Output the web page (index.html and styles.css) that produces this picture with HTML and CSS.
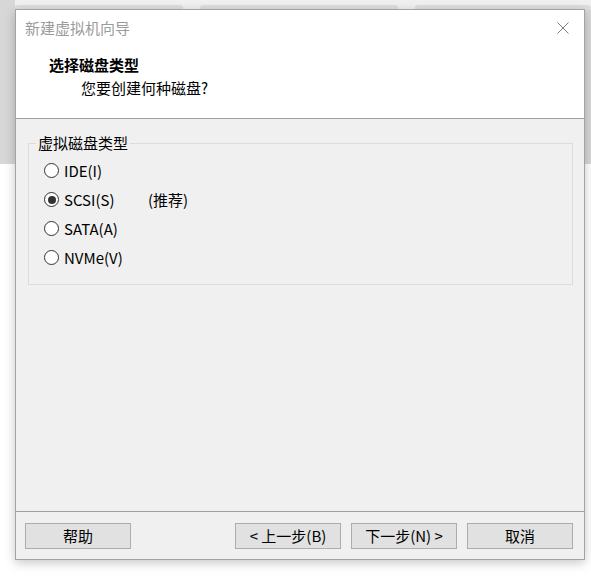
FILE: index.html
```html
<!DOCTYPE html>
<html lang="zh-CN">
<head>
<meta charset="utf-8">
<title>新建虚拟机向导</title>
<link rel="stylesheet" href="styles.css">
</head>
<body>
<div class="desktop">
  <div class="backdrop">
    <div class="back-top">
      <span class="tab tab-a"></span>
      <span class="tab tab-b"></span>
      <span class="tab tab-c"></span>
    </div>
  </div>
  <div class="dialog">
    <div class="header">
      <div class="titlebar">
        <span class="title">新建虚拟机向导</span>
        <svg class="close" width="12" height="12" viewBox="0 0 12 12" aria-label="关闭">
          <path d="M0.5 0.5 L11.5 11.5 M11.5 0.5 L0.5 11.5" stroke="#7a7a7a" stroke-width="1" fill="none"/>
        </svg>
      </div>
      <div class="heading">选择磁盘类型</div>
      <div class="subheading">您要创建何种磁盘?</div>
    </div>
    <div class="sep"></div>
    <div class="content">
      <fieldset class="group">
        <legend class="legend">虚拟磁盘类型</legend>
        <div class="option"><span class="radio"></span><span class="label">IDE(I)</span></div>
        <div class="option"><span class="radio checked"></span><span class="label label-wide">SCSI(S)</span><span class="hint">(推荐)</span></div>
        <div class="option"><span class="radio"></span><span class="label">SATA(A)</span></div>
        <div class="option"><span class="radio"></span><span class="label">NVMe(V)</span></div>
      </fieldset>
    </div>
    <div class="sep"></div>
    <div class="buttons">
      <button class="btn">帮助</button>
      <span class="spacer"></span>
      <button class="btn">&lt; 上一步(B)</button>
      <button class="btn">下一步(N) &gt;</button>
      <button class="btn">取消</button>
    </div>
  </div>
</div>
</body>
</html>
```

FILE: styles.css
```css
html, body {
  margin: 0;
  padding: 0;
  background: #ffffff;
}

body {
  width: 591px;
  height: 581px;
  overflow: hidden;
  font-family: "Noto Sans CJK SC", "Noto Sans", sans-serif;
  font-size: 15px;
  color: #000;
}

.desktop {
  position: relative;
  width: 591px;
  height: 581px;
  background: #ffffff;
}

.backdrop {
  position: absolute;
  left: 0;
  top: 0;
  width: 591px;
  height: 164px;
  background: #d7d7d7;
}

.back-top {
  position: absolute;
  left: 15px;
  top: 0;
  width: 576px;
  height: 10px;
  background: #f0f0f0;
}

.tab {
  position: absolute;
  top: 5px;
  height: 5px;
  background: #dedede;
  border-radius: 3px 3px 0 0;
}
.tab-a { left: 0; width: 168px; }
.tab-b { left: 185px; width: 198px; }
.tab-c { left: 400px; width: 176px; }

.dialog {
  position: absolute;
  left: 15px;
  top: 9px;
  width: 568px;
  height: 549px;
  border: 1px solid #a3a3a3;
  background: #f0f0f0;
  display: flex;
  flex-direction: column;
  box-shadow: 0 3px 10px rgba(0, 0, 0, 0.22);
}

.header {
  background: #ffffff;
  height: 108px;
}

.titlebar {
  height: 36px;
  display: flex;
  align-items: center;
  justify-content: space-between;
  padding: 0 15px 0 9px;
}

.title {
  color: #9b9b9b;
  line-height: 20px;
}

.close {
  display: block;
}

.heading {
  margin-top: 9px;
  padding-left: 33px;
  font-weight: 700;
  line-height: 20px;
}

.subheading {
  margin-top: 3px;
  padding-left: 65px;
  line-height: 20px;
}

.sep {
  height: 1px;
  background: #a0a0a0;
  flex: none;
}

.content {
  height: 392px;
  padding: 14px 11px 0 12px;
  box-sizing: border-box;
}

.group {
  margin: 0;
  padding: 0 0 12px 15px;
  border: 1px solid #dcdcdc;
  min-width: 0;
}

.legend {
  margin-left: -8px;
  padding: 0 2px;
  line-height: 20px;
  color: #000;
}

.option {
  height: 29px;
  display: flex;
  align-items: center;
}

.option:first-of-type {
  margin-top: 3px;
}

.radio {
  width: 13px;
  height: 13px;
  border: 1px solid #333333;
  border-radius: 50%;
  background: #ffffff;
  position: relative;
  flex: none;
}

.radio.checked::after {
  content: "";
  position: absolute;
  left: 2.5px;
  top: 2.5px;
  width: 8px;
  height: 8px;
  border-radius: 50%;
  background: #333333;
}

.label {
  margin-left: 5px;
  line-height: 20px;
}

.label-wide {
  width: 84px;
}

.hint {
  line-height: 20px;
}

.buttons {
  flex: 1;
  display: flex;
  align-items: flex-start;
  gap: 10px;
  padding: 11px 11px 0 9px;
}

.spacer {
  flex: 1;
}

.btn {
  width: 106px;
  height: 26px;
  margin: 0;
  padding: 0;
  border: 1px solid #adadad;
  background: #e1e1e1;
  font-family: "Noto Sans CJK SC", "Noto Sans", sans-serif;
  font-size: 15px;
  color: #000;
  line-height: 22px;
}
```
